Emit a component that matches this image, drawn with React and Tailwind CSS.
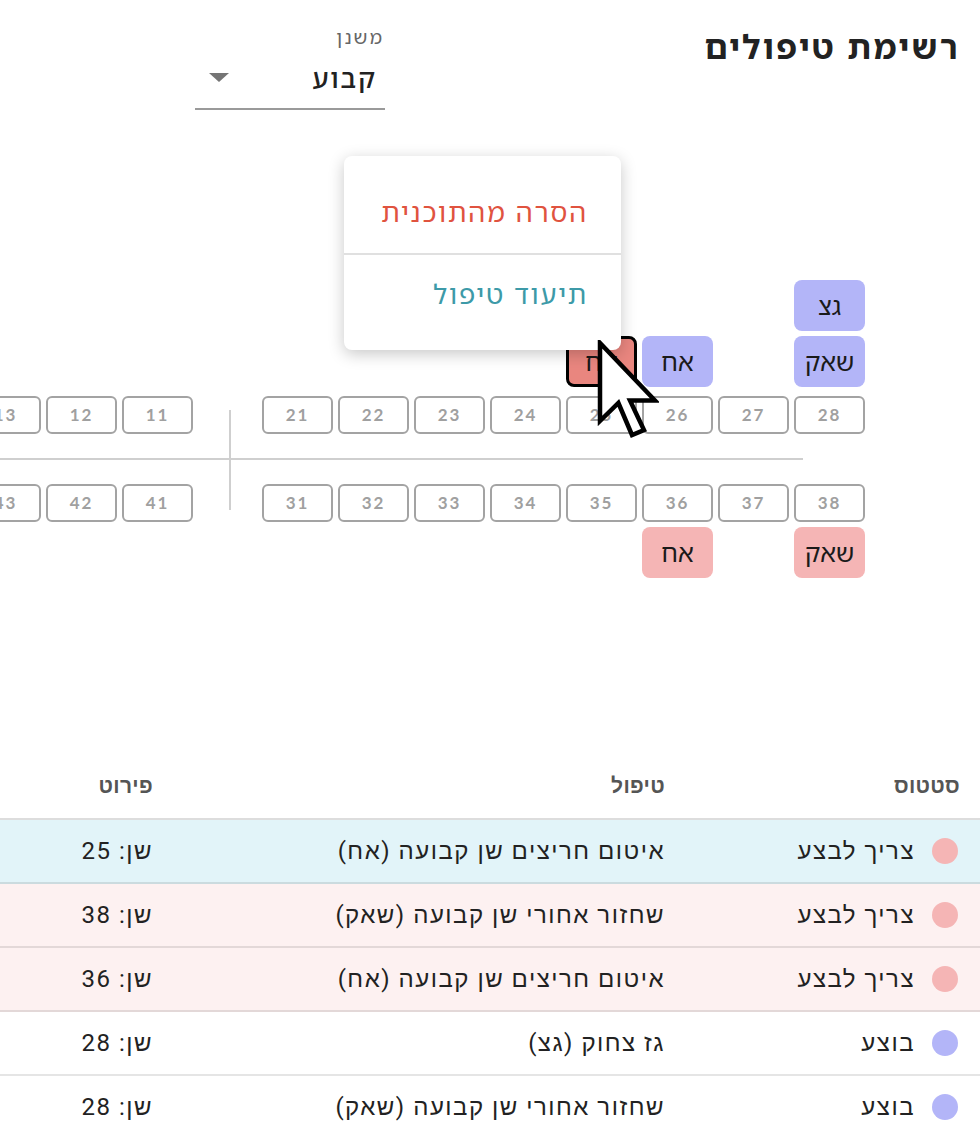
import React from "react";

const upperChips = {
  28: [
    { t: "גצ", c: "blue" },
    { t: "שאק", c: "blue" },
  ],
  26: [{ t: "אח", c: "blue" }],
  25: [{ t: "אח", c: "sel" }],
};
const lowerChips = {
  36: [{ t: "אח", c: "pink" }],
  38: [{ t: "שאק", c: "pink" }],
};

function Chip({ t, c }) {
  const cls =
    c === "blue"
      ? "bg-[#b3b5f8] border-0"
      : c === "pink"
      ? "bg-[#f5b5b5] border-0"
      : "bg-[#e9867f] border-[3px] border-black";
  return (
    <div
      className={`h-[51px] w-[71px] rounded-[8px] flex items-center justify-center text-[25px] text-[#1a1a1a] ${cls}`}
    >
      {t}
    </div>
  );
}

function Tooth({ n }) {
  return (
    <div className="h-[38px] w-[71px] rounded-[6px] border-2 border-[#a3a3a3] flex items-center justify-center font-['Lato',sans-serif] font-bold text-[17px] tracking-[2px] text-[#a0a0a0]">
      {n}
    </div>
  );
}

function Half({ teeth, upper }) {
  const map = upper ? upperChips : lowerChips;
  return (
    <div className={`flex gap-[5px] ${upper ? "items-end" : "items-start"}`}>
      {teeth.map((n) => {
        const chips = map[n] || [];
        return (
          <div key={n} className="flex flex-col w-[71px]">
            {upper ? (
              <>
                <div className="flex flex-col gap-[5px] mb-[9px]">
                  {chips.map((ch, i) => (
                    <Chip key={i} {...ch} />
                  ))}
                </div>
                <Tooth n={n} />
              </>
            ) : (
              <>
                <Tooth n={n} />
                <div className="flex flex-col gap-[5px] mt-[5px]">
                  {chips.map((ch, i) => (
                    <Chip key={i} {...ch} />
                  ))}
                </div>
              </>
            )}
          </div>
        );
      })}
    </div>
  );
}

const rows = [
  { s: "צריך לבצע", dot: "bg-[#f5b5b5]", t: "איטום חריצים שן קבועה (אח)", d: "שן: 25", bg: "bg-[#e2f4f9]" },
  { s: "צריך לבצע", dot: "bg-[#f5b5b5]", t: "שחזור אחורי שן קבועה (שאק)", d: "שן: 38", bg: "bg-[#fdf1f1]" },
  { s: "צריך לבצע", dot: "bg-[#f5b5b5]", t: "איטום חריצים שן קבועה (אח)", d: "שן: 36", bg: "bg-[#fdf1f1]" },
  { s: "בוצע", dot: "bg-[#b3b5f8]", t: "גז צחוק (גצ)", d: "שן: 28", bg: "bg-white" },
  { s: "בוצע", dot: "bg-[#b3b5f8]", t: "שחזור אחורי שן קבועה (שאק)", d: "שן: 28", bg: "bg-white" },
];

export default function App() {
  return (
    <div
      dir="rtl"
      className="relative w-[980px] h-[1126px] overflow-hidden bg-white text-[#1f1f1f] font-['Noto_Sans_Hebrew','Open_Sans','Liberation_Sans',sans-serif]"
    >
      {/* Header */}
      <div className="flex items-start pr-5">
        <div className="w-[575px] shrink-0 pt-[26px]">
          <h1 className="text-[33px] leading-[42px] font-bold tracking-[2.3px] text-[#222]">רשימת טיפולים</h1>
        </div>
        <div className="w-[190px] shrink-0 pt-[25px] border-b-2 border-[#9a9a9a] pb-[12px]">
          <div className="pr-[1px] text-[19px] leading-[24px] tracking-[2px] text-[#666]">משנן</div>
          <div className="mt-[11px] flex items-center justify-between pr-[8px] pl-[14px]">
            <span className="text-[27px] leading-[36px] font-medium tracking-[1.8px] text-[#222]">קבוע</span>
            <svg width="20" height="10" viewBox="0 0 20 10">
              <polygon points="0,0 20,0 10,9" fill="#757575" />
            </svg>
          </div>
        </div>
      </div>

      {/* Tooth chart */}
      <div className="relative mr-[115px] mt-[170px] w-[1275px] shrink-0">
        <div className="flex items-end">
          <Half teeth={[28, 27, 26, 25, 24, 23, 22, 21]} upper />
          <div className="w-[69px] shrink-0" />
          <Half teeth={[11, 12, 13, 14, 15, 16, 17, 18]} upper />
        </div>
        <div className="h-[50px]" />
        <div className="flex items-start">
          <Half teeth={[38, 37, 36, 35, 34, 33, 32, 31]} />
          <div className="w-[69px] shrink-0" />
          <Half teeth={[41, 42, 43, 44, 45, 46, 47, 48]} />
        </div>
        <div className="absolute top-[178px] left-[67px] w-[1146px] h-[2px] bg-[#cfcfcf]" />
        <div className="absolute top-[130px] left-[639px] w-[2px] h-[100px] bg-[#cfcfcf]" />
      </div>

      {/* Table */}
      <div className="mt-[178px] font-['Roboto',sans-serif]">
        <div className="flex h-[64px] items-center border-b-2 border-[#dddddd] text-[21px] font-bold tracking-[0.3px] text-[#555]">
          <div className="w-[295px] shrink-0 pr-5">סטטוס</div>
          <div className="w-[512px] shrink-0 pr-5">טיפול</div>
          <div className="flex-1 pr-5">פירוט</div>
        </div>
        {rows.map((r, i) => (
          <div key={i} className={`flex h-[64px] items-center border-b-2 border-black/10 text-[24px] tracking-[1.5px] text-[#222] ${r.bg}`}>
            <div className="w-[295px] shrink-0 pr-[22px] flex items-center gap-[17px]">
              <span className={`w-[26px] h-[26px] rounded-full shrink-0 ${r.dot}`} />
              <span>{r.s}</span>
            </div>
            <div className="w-[512px] shrink-0 pr-5">{r.t}</div>
            <div className="flex-1 pr-5">{r.d}</div>
          </div>
        ))}
      </div>

      {/* Context menu */}
      <div className="absolute left-[344px] top-[156px] w-[277px] h-[194px] bg-white rounded-[8px] shadow-[0_4px_16px_rgba(0,0,0,0.22)] flex flex-col">
        <div className="h-[97px] flex items-center pr-[33px] pt-[16px] text-[27px] tracking-[1.8px] text-[#e0533f]">הסרה מהתוכנית</div>
        <div className="h-[2px] bg-[#e0e0e0]" />
        <div className="h-[95px] flex items-center pr-[33px] pb-[16px] text-[27px] tracking-[1.8px] text-[#3d9aa8]">תיעוד טיפול</div>
      </div>

      {/* Cursor */}
      <svg className="absolute left-[597px] top-[340px]" width="62" height="100" viewBox="0 0 62 100">
        <path
          transform="translate(3,3)"
          d="M0 0 L0 78 L18.4 60 L32 92 L44 87 L30 57.5 L55 57.5 Z"
          fill="#ffffff"
          stroke="#000000"
          strokeWidth="4.5"
          strokeLinejoin="miter"
        />
      </svg>
    </div>
  );
}
